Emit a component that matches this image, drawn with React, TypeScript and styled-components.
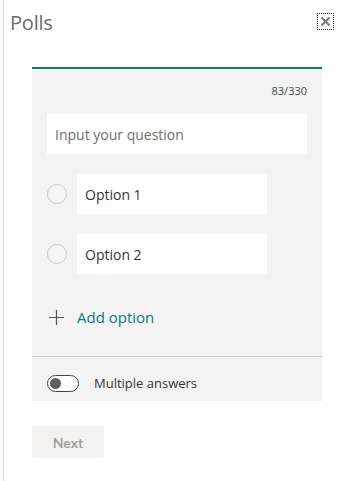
import React from 'react'
import styled, { createGlobalStyle } from 'styled-components'

const GlobalStyle = createGlobalStyle`
  html, body {
    margin: 0;
    padding: 0;
    background: #fff;
  }
  body {
    font-family: 'Open Sans', 'Noto Sans', sans-serif;
    color: #333;
  }
`

const Panel = styled.div`
  margin-left: 3px;
  border-left: 1px solid #d8d8d8;
  min-height: 100vh;
  box-sizing: border-box;
`

const Header = styled.div`
  display: flex;
  justify-content: space-between;
  align-items: flex-start;
  height: 67px;
  padding: 8px 14px 0 6px;
  box-sizing: border-box;
`

const Title = styled.h1`
  margin: 0;
  font-size: 20px;
  font-weight: 400;
  color: #6b6b6b;
  letter-spacing: -0.2px;
  line-height: 30px;
`

const CloseButton = styled.button`
  width: 15px;
  height: 15px;
  margin-top: 6px;
  padding: 0;
  border: none;
  background: transparent;
  outline: 1px dotted #222;
  display: flex;
  align-items: center;
  justify-content: center;
`

const Content = styled.div`
  padding: 0 25px 0 28px;
`

const Card = styled.div`
  border-top: 2px solid #077b7e;
  background: #f3f3f3;
  padding: 14px 15px 0 15px;
`

const Counter = styled.div`
  text-align: right;
  font-size: 11px;
  line-height: 16px;
  color: #3c4a4c;
`

const TextBox = styled.div<{ $width?: string }>`
  height: 40px;
  width: ${p => p.$width ?? '100%'};
  background: #fff;
  display: flex;
  align-items: center;
  padding-left: 8px;
  box-sizing: border-box;
  font-size: 14px;
`

const Placeholder = styled.span`
  color: #6e6e6e;
`

const QuestionBox = styled(TextBox)`
  margin-top: 15px;
`

const OptionList = styled.div`
  display: flex;
  flex-direction: column;
  gap: 20px;
  margin-top: 20px;
`

const OptionRow = styled.div`
  display: flex;
  align-items: center;
  gap: 10px;
`

const Radio = styled.span`
  width: 18px;
  height: 18px;
  border: 1px solid #c8c8c8;
  border-radius: 50%;
  background: #f6f6f6;
`

const AddOption = styled.div`
  display: flex;
  align-items: center;
  gap: 13px;
  margin-top: 31px;
  margin-left: 2px;
  color: #077b7e;
  font-size: 15px;
  line-height: 24px;
`

const Divider = styled.div`
  height: 1px;
  background: #c8c8c8;
  margin: 27px -15px 0;
`

const ToggleRow = styled.div`
  display: flex;
  align-items: center;
  gap: 15px;
  padding: 17px 0 9px;
  font-size: 13px;
  color: #333;
`

const Toggle = styled.span`
  width: 32px;
  height: 17px;
  border: 1px solid #444;
  border-radius: 9px;
  box-sizing: border-box;
  display: flex;
  align-items: center;
  padding-left: 2px;
  background: #fff;
`

const Knob = styled.span`
  width: 11px;
  height: 11px;
  border-radius: 50%;
  background: #5f5f5f;
`

const NextButton = styled.button`
  margin-top: 25px;
  width: 72px;
  height: 32px;
  border: none;
  border-radius: 3px;
  background: #f3f2f1;
  color: #a19f9d;
  font-family: Lato, 'Open Sans', sans-serif;
  font-weight: 700;
  font-size: 14px;
`

export default function App() {
  return (
    <>
      <GlobalStyle />
      <Panel>
        <Header>
          <Title>Polls</Title>
          <CloseButton aria-label="Close">
            <svg width="11" height="11" viewBox="0 0 11 11">
              <path d="M1.5 1.5 L9.5 9.5 M9.5 1.5 L1.5 9.5" stroke="#7a7a7a" strokeWidth="2.2" />
            </svg>
          </CloseButton>
        </Header>
        <Content>
          <Card>
            <Counter>83/330</Counter>
            <QuestionBox>
              <Placeholder>Input your question</Placeholder>
            </QuestionBox>
            <OptionList>
              {['Option 1', 'Option 2'].map(o => (
                <OptionRow key={o}>
                  <Radio />
                  <TextBox $width="190px">{o}</TextBox>
                </OptionRow>
              ))}
            </OptionList>
            <AddOption>
              <svg width="15" height="15" viewBox="0 0 15 15">
                <path d="M7.5 0 V15 M0 7.5 H15" stroke="#555" strokeWidth="1.2" />
              </svg>
              Add option
            </AddOption>
            <Divider />
            <ToggleRow>
              <Toggle>
                <Knob />
              </Toggle>
              Multiple answers
            </ToggleRow>
          </Card>
          <NextButton disabled>Next</NextButton>
        </Content>
      </Panel>
    </>
  )
}
